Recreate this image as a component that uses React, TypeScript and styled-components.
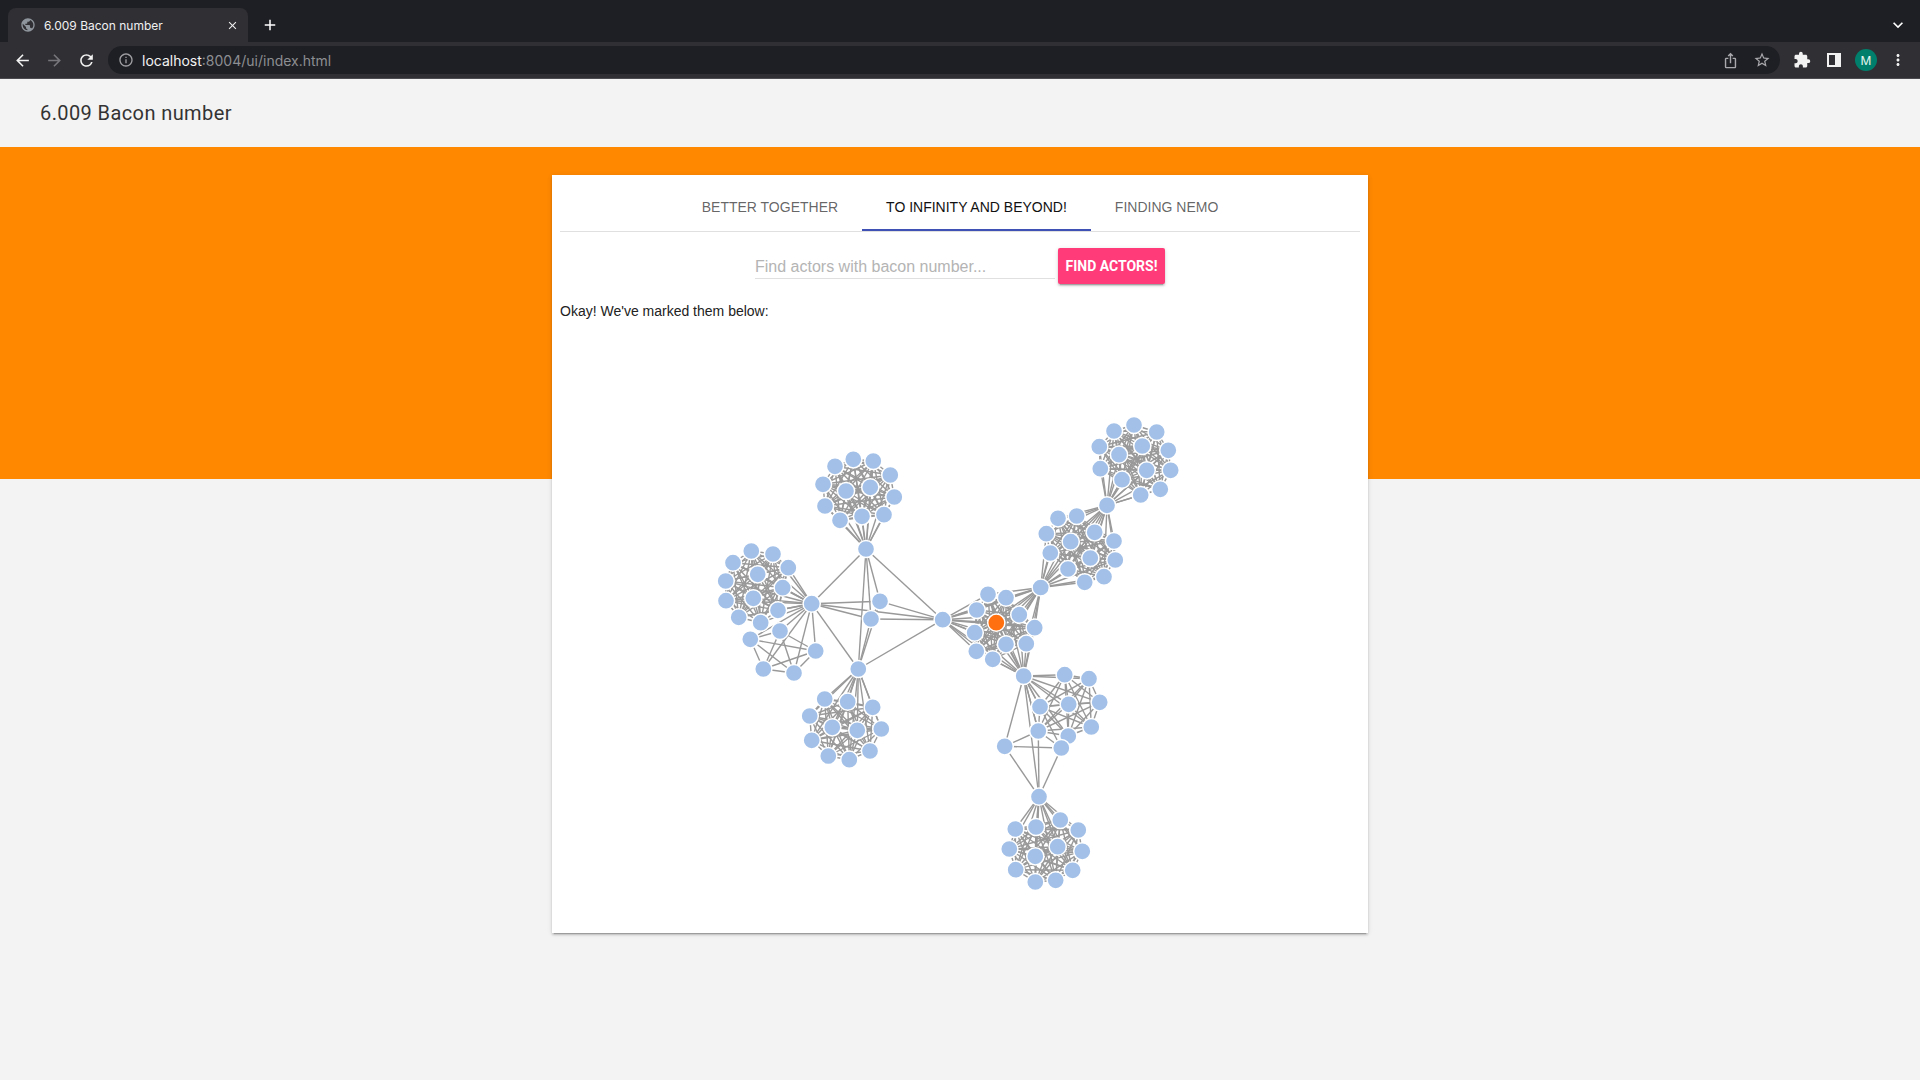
import React from 'react';
import styled, { createGlobalStyle } from 'styled-components';
import {
  MdArrowBack,
  MdArrowForward,
  MdClose,
  MdExtension,
  MdInfoOutline,
  MdIosShare,
  MdKeyboardArrowDown,
  MdMoreVert,
  MdPublic,
  MdRefresh,
  MdStarBorder,
  MdAdd,
} from 'react-icons/md';

const GlobalStyle = createGlobalStyle`
  html, body {
    margin: 0;
    padding: 0;
    background: #f3f3f3;
    font-family: "Liberation Sans", Arial, sans-serif;
  }
  * {
    box-sizing: border-box;
  }
`;

const Page = styled.div`
  width: 1920px;
  height: 1080px;
  overflow: hidden;
  background: #f3f3f3;
`;

const TabStrip = styled.div`
  height: 42px;
  background: #1e1f24;
  padding: 8px 0 0 8px;
  display: flex;
  align-items: stretch;
  color: #fff;
`;

const BrowserTab = styled.div`
  width: 240px;
  background: #2f2f34;
  border-radius: 8px 8px 0 0;
  display: flex;
  align-items: center;
  padding: 0 9px 0 12px;
  font-family: Inter, "Liberation Sans", sans-serif;
  font-size: 12px;
  color: #f0f0f0;
`;

const TabTitle = styled.span`
  margin-left: 8px;
  flex: 1;
`;

const NewTab = styled.div`
  width: 44px;
  display: flex;
  align-items: center;
  justify-content: center;
  font-size: 18px;
`;

const StripEnd = styled.div`
  margin-left: auto;
  width: 44px;
  display: flex;
  align-items: center;
  justify-content: center;
  font-size: 20px;
`;

const Toolbar = styled.div`
  height: 37px;
  background: #2f2f34;
  border-bottom: 1px solid #4b4b50;
  display: flex;
  align-items: center;
  padding: 0 0 0 6px;
  color: #f0f0f0;
`;

const NavButton = styled.div<{ $dim?: boolean }>`
  width: 32px;
  height: 28px;
  font-size: 19px;
  display: flex;
  align-items: center;
  justify-content: center;
  color: ${props => (props.$dim ? '#77777b' : '#f2f2f2')};
`;

const AddressBar = styled.div`
  margin-left: 6px;
  width: 1672px;
  height: 28px;
  border-radius: 14px;
  background: #1e1f24;
  display: flex;
  align-items: center;
  padding: 0 0 0 10px;
  font-family: Inter, "Liberation Sans", sans-serif;
  font-size: 14px;
  color: #8d8e92;
`;

const Host = styled.span`
  color: #f2f2f2;
`;

const SiteInfo = styled.span`
  display: flex;
  font-size: 16px;
  margin-right: 8px;
  color: #a0a0a4;
`;

const AddressActions = styled.div`
  margin-left: auto;
  display: flex;
  align-items: center;
  gap: 12px;
  padding-right: 8px;
  font-size: 18px;
  color: #a9a9ad;
`;

const ActionIcon = styled.span`
  display: flex;
  width: 20px;
  justify-content: center;
`;

const Extensions = styled.div`
  display: flex;
  align-items: center;
  margin-left: 6px;
`;

const ExtensionButton = styled.div`
  width: 32px;
  height: 28px;
  display: flex;
  align-items: center;
  justify-content: center;
  font-size: 18px;
  color: #f2f2f2;
`;

const Avatar = styled.div`
  width: 22px;
  height: 22px;
  margin: 0 5px;
  border-radius: 50%;
  background: #00806c;
  color: #e8f5f0;
  font-family: Inter, "Liberation Sans", sans-serif;
  font-size: 12px;
  display: flex;
  align-items: center;
  justify-content: center;
`;

const SiteHeader = styled.header`
  height: 68px;
  padding-left: 40px;
  display: flex;
  align-items: center;
  font-family: Roboto, "Liberation Sans", sans-serif;
  font-size: 20px;
  letter-spacing: 0.4px;
  color: #333;
`;

const Hero = styled.main`
  height: 332px;
  background: #ff8800;
  padding-top: 28px;
`;

const Card = styled.section`
  width: 816px;
  height: 758px;
  margin: 0 auto;
  background: #fff;
  padding: 0 8px;
  box-shadow: 0 2px 2px 0 rgba(0, 0, 0, 0.14), 0 3px 1px -2px rgba(0, 0, 0, 0.2),
    0 1px 5px 0 rgba(0, 0, 0, 0.12);
`;

const TabBar = styled.nav`
  height: 57px;
  display: flex;
  justify-content: center;
  border-bottom: 1px solid #e0e0e0;
`;

const TabLink = styled.div<{ $active?: boolean }>`
  height: 56px;
  padding: 10px 24px 0;
  display: flex;
  align-items: center;
  font-size: 14px;
  color: ${props => (props.$active ? '#111' : 'rgba(0, 0, 0, 0.62)')};
  border-bottom: 2px solid ${props => (props.$active ? '#3f51b5' : 'transparent')};
`;

const SearchRow = styled.div`
  margin-top: 16px;
  display: flex;
  justify-content: center;
  align-items: flex-start;
  gap: 3px;
`;

const SearchInput = styled.input`
  width: 300px;
  height: 31px;
  margin-top: 0;
  padding: 8px 0 1px;
  border: none;
  border-bottom: 1px solid #e0e0e0;
  background: none;
  outline: none;
  font-family: inherit;
  font-size: 16px;

  &::placeholder {
    color: #b4b4b4;
    opacity: 1;
  }
`;

const FindButton = styled.button`
  width: 107px;
  height: 36px;
  padding: 0;
  border: none;
  border-radius: 2px;
  background: #ff3b7a;
  color: #fff;
  font-family: Roboto, "Liberation Sans", sans-serif;
  font-size: 14px;
  font-weight: 700;
  box-shadow: 0 2px 2px 0 rgba(0, 0, 0, 0.14), 0 3px 1px -2px rgba(0, 0, 0, 0.2),
    0 1px 5px 0 rgba(0, 0, 0, 0.12);
`;

const Message = styled.p`
  margin: 18px 0 0;
  font-size: 14px;
  line-height: 18px;
  color: #222;
`;

const Graph = styled.svg`
  display: block;
  width: 800px;
  height: 600px;
  margin-top: 5px;
`;

const Link = styled.line`
  stroke: #999;
  stroke-width: 1.4;
`;

const Node = styled.circle<{ $hit?: boolean }>`
  fill: ${props => (props.$hit ? '#ff7010' : '#a3c1e8')};
  stroke: #fff;
  stroke-width: 1.5;
`;

type Point = [number, number];

// hubs sit between the clusters, each one linked to every actor in its clusters
const A: Point = [866, 549];
const B: Point = [811.7, 603.7];
const C: Point = [942.7, 619.7];
const D: Point = [858.3, 669];
const E: Point = [1040.7, 587.5];
const F: Point = [1023.7, 676];
const G: Point = [1039, 796.7];
const H: Point = [1107, 505.3];

const HIT: Point = [996.3, 622.7];

const cliques: Point[][] = [
  [
    A,
    [853.3, 459.3], [873.3, 461], [835, 466.3], [890.3, 475], [823, 484.3], [846, 491],
    [870.3, 487.3], [894.3, 497], [825, 506], [840, 520.3], [862, 516.3], [884, 514.7],
  ],
  [
    B,
    [751.3, 551], [773, 554], [733, 562.7], [788.3, 567.7], [757.7, 574.3], [725.7, 581],
    [782.7, 587.7], [753.3, 598.3], [726, 600.7], [778, 610.3], [738.7, 617.3], [760.7, 622.7],
  ],
  [B, [780, 631], [750.3, 639.3], [815.7, 651], [763.3, 669], [794, 673]],
  [A, B, C, D, [880, 601.3], [871, 619]],
  [
    D,
    [824.7, 699], [847.7, 701.7], [872.7, 707.3], [809.7, 716], [832.3, 727.3], [857.3, 730.3],
    [881.3, 729], [811.7, 740.3], [870, 751], [828.3, 756], [849.3, 759.7],
  ],
  [
    C, E, F,
    [988, 594.3], [1006, 597.7], [976.7, 610], [1019.3, 614.7], HIT, [1034.7, 627.7],
    [974.7, 632.7], [1006, 644.3], [1026.3, 643.7], [976.3, 651.3], [992.7, 659.3],
  ],
  [
    F,
    [1064.7, 674.7], [1089, 678.7], [1040, 706.7], [1068.7, 704.3], [1099.7, 702.3],
    [1038.3, 731], [1068.3, 736], [1091.3, 727],
  ],
  [F, G, [1004.7, 746.3], [1038.3, 731], [1061.3, 748]],
  [
    G,
    [1015.3, 829], [1036, 827], [1060.3, 820], [1078.3, 830], [1009.3, 849], [1057.7, 846.7],
    [1035.3, 856.3], [1082.3, 851.3], [1015.7, 869.7], [1072.7, 870.3], [1035.3, 882],
    [1055.7, 880.3],
  ],
  [
    E, H,
    [1076.7, 516], [1058, 518.3], [1046.3, 533.7], [1094.7, 532.3], [1114, 541], [1070.7, 541.7],
    [1050.3, 553], [1090.3, 558], [1115.3, 560], [1068, 569], [1104, 576.7], [1084.7, 582.3],
  ],
  [
    H,
    [1134, 425], [1114, 431], [1156.7, 432], [1099.3, 446.7], [1142.3, 446], [1168.3, 450.3],
    [1119, 454.7], [1100.3, 468.7], [1146.7, 470.3], [1170.7, 470.3], [1122, 479.7],
    [1160.3, 489.3], [1140.7, 495],
  ],
];

const links: [Point, Point][] = cliques.flatMap(group =>
  group.flatMap((from, i) => group.slice(i + 1).map((to): [Point, Point] => [from, to])),
);

const nodes: Point[] = Array.from(new Set(cliques.flat()));

const PanelIcon = () => (
  <svg width="14" height="14" viewBox="0 0 14 14">
    <path fill="#f2f2f2" fillRule="evenodd" d="M0 0h14v14H0z M2 2v10h6V2z" />
  </svg>
);

const App: React.FC = () => {
  return (
    <Page>
      <GlobalStyle />
      <TabStrip>
        <BrowserTab>
          <MdPublic size={16} color="#8f959c" />
          <TabTitle>6.009 Bacon number</TabTitle>
          <MdClose size={13} />
        </BrowserTab>
        <NewTab>
          <MdAdd />
        </NewTab>
        <StripEnd>
          <MdKeyboardArrowDown />
        </StripEnd>
      </TabStrip>
      <Toolbar>
        <NavButton>
          <MdArrowBack />
        </NavButton>
        <NavButton $dim>
          <MdArrowForward />
        </NavButton>
        <NavButton>
          <MdRefresh />
        </NavButton>
        <AddressBar>
          <SiteInfo>
            <MdInfoOutline />
          </SiteInfo>
          <Host>localhost</Host>:8004/ui/index.html
          <AddressActions>
            <ActionIcon>
              <MdIosShare size={17} />
            </ActionIcon>
            <ActionIcon>
              <MdStarBorder />
            </ActionIcon>
          </AddressActions>
        </AddressBar>
        <Extensions>
          <ExtensionButton>
            <MdExtension />
          </ExtensionButton>
          <ExtensionButton>
            <PanelIcon />
          </ExtensionButton>
          <Avatar>M</Avatar>
          <ExtensionButton>
            <MdMoreVert />
          </ExtensionButton>
        </Extensions>
      </Toolbar>
      <SiteHeader>6.009 Bacon number</SiteHeader>
      <Hero>
        <Card>
          <TabBar>
            <TabLink>BETTER TOGETHER</TabLink>
            <TabLink $active>TO INFINITY AND BEYOND!</TabLink>
            <TabLink>FINDING NEMO</TabLink>
          </TabBar>
          <SearchRow>
            <SearchInput placeholder="Find actors with bacon number..." />
            <FindButton>FIND ACTORS!</FindButton>
          </SearchRow>
          <Message>Okay! We've marked them below:</Message>
          <Graph viewBox="560 325 800 600">
            {links.map(([from, to], i) => (
              <Link key={i} x1={from[0]} y1={from[1]} x2={to[0]} y2={to[1]} />
            ))}
            {nodes.map(point => (
              <Node key={point.join()} cx={point[0]} cy={point[1]} r={8.6} $hit={point === HIT} />
            ))}
          </Graph>
        </Card>
      </Hero>
    </Page>
  );
};

export default App;
